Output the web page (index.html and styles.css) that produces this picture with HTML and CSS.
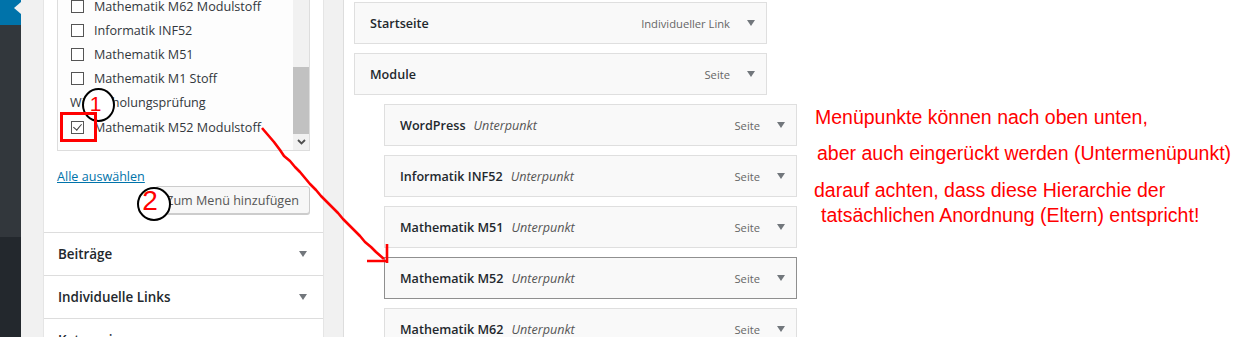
FILE: index.html
```html
<!DOCTYPE html>
<html lang="de">
<head>
  <meta charset="UTF-8" />
  <meta name="viewport" content="width=device-width, initial-scale=1.0" />
  <title>Menüs bearbeiten</title>
  <link rel="stylesheet" href="styles.css">
</head>
<body>
  <!-- Admin-Leiste links -->
  <div class="adminmenu">
    <div class="menu-current"></div>
    <div class="submenu"></div>
    <div class="menu-rest"></div>
  </div>

  <div class="wrap">
    <!-- Spalte mit Seiten zum Hinzufügen -->
    <div class="metaboxes">
      <div class="box-inside">
        <div class="checklist">
          <ul class="items">
            <li><span class="cb"></span>Mathematik M62 Modulstoff</li>
            <li><span class="cb"></span>Informatik INF52</li>
            <li><span class="cb"></span>Mathematik M51</li>
            <li><span class="cb"></span>Mathematik M1 Stoff</li>
            <li class="plain">Wiederholungsprüfung</li>
            <li><span class="cb checked"></span>Mathematik M52 Modulstoff</li>
          </ul>
          <div class="scrollbar">
            <div class="thumb"></div>
            <div class="scroll-down">
              <svg width="9" height="6" viewBox="0 0 9 6"><polyline points="1,1 4.5,4.5 8,1" fill="none" stroke="#505050" stroke-width="1.8"/></svg>
            </div>
          </div>
        </div>
        <a class="select-all" href="#">Alle auswählen</a>
        <div class="add-row">
          <button class="add-btn">Zum Menü hinzufügen</button>
        </div>
      </div>
      <div class="acc">Beiträge<span class="tri"></span></div>
      <div class="acc">Individuelle Links<span class="tri"></span></div>
      <div class="acc">Kategorien<span class="tri"></span></div>
    </div>

    <!-- Menüstruktur -->
    <div class="menu-edit">
      <ul class="menu">
        <li class="item"><span class="title">Startseite</span><span class="type">Individueller Link</span><span class="tri"></span></li>
        <li class="item"><span class="title">Module</span><span class="type">Seite</span><span class="tri"></span></li>
        <li class="item sub"><span class="title">WordPress</span><span class="sub-label">Unterpunkt</span><span class="type">Seite</span><span class="tri"></span></li>
        <li class="item sub"><span class="title">Informatik INF52</span><span class="sub-label">Unterpunkt</span><span class="type">Seite</span><span class="tri"></span></li>
        <li class="item sub"><span class="title">Mathematik M51</span><span class="sub-label">Unterpunkt</span><span class="type">Seite</span><span class="tri"></span></li>
        <li class="item sub active"><span class="title">Mathematik M52</span><span class="sub-label">Unterpunkt</span><span class="type">Seite</span><span class="tri"></span></li>
        <li class="item sub"><span class="title">Mathematik M62</span><span class="sub-label">Unterpunkt</span><span class="type">Seite</span><span class="tri"></span></li>
      </ul>
      <div class="notes">
        <p class="n1">Menüpunkte können nach oben unten,</p>
        <p class="n2">aber auch eingerückt werden (Untermenüpunkt)</p>
        <p class="n3">darauf achten, dass diese Hierarchie der</p>
        <p class="n4">tatsächlichen Anordnung (Eltern) entspricht!</p>
      </div>
    </div>
  </div>

  <!-- Markierungen -->
  <div class="ring ring-1">1</div>
  <div class="box-mark"></div>
  <div class="ring ring-2">2</div>
  <svg class="arrow" width="1243" height="337" viewBox="0 0 1243 337">
    <polyline points="262,128 268,135 274,142 280,150 284,156 290,161 295,167 300,172 305,178 310,184 316,190 321,196 327,202 332,207 338,213 343,219 349,225 354,230 360,236 365,242 371,247 376,252 384,259"
      fill="none" stroke="#f00" stroke-width="2.6" stroke-linejoin="bevel"/>
    <path d="M387,244 L387,263 M367,261 L388,261" fill="none" stroke="#f00" stroke-width="2.6"/>
  </svg>
</body>
</html>
```

FILE: styles.css
```css
body {
  margin: 0;
  height: 100vh;
  overflow: hidden;
  display: flex;
  position: relative;
  background-color: #f1f1f1;
  font-family: "Open Sans", "Noto Sans", sans-serif;
  font-size: 12.6px;
  color: #32373c;
}

/* Admin-Leiste */
.adminmenu {
  width: 21px;
  flex-shrink: 0;
  display: flex;
  flex-direction: column;
}

.menu-current {
  height: 25px;
  background-color: #0073aa;
  position: relative;
}

.menu-current::after {
  content: "";
  position: absolute;
  right: 0;
  top: 2px;
  border-right: 7px solid #f1f1f1;
  border-top: 6px solid transparent;
  border-bottom: 6px solid transparent;
}

.submenu {
  height: 212px;
  background-color: #32373c;
}

.menu-rest {
  flex: 1;
  background-color: #23282d;
}

.wrap {
  flex: 1;
  display: flex;
  padding-left: 22px;
}

/* Linke Spalte */
.metaboxes {
  width: 279px;
  flex-shrink: 0;
  background-color: #fff;
  border-left: 1px solid #e5e5e5;
  border-right: 1px solid #e5e5e5;
}

.box-inside {
  padding: 0 13px 18px 13px;
}

.checklist {
  margin-top: -10px;
  display: flex;
  border: 1px solid #ddd;
  background-color: #fdfdfd;
}

.items {
  list-style: none;
  margin: 0;
  padding: 3px 0 11px 13px;
  flex: 1;
}

.items li {
  height: 24.2px;
  display: flex;
  align-items: center;
  white-space: nowrap;
}

.items li.plain {
  margin-left: -1px;
}

.cb {
  width: 13px;
  height: 13px;
  box-sizing: border-box;
  border: 1px solid #555;
  background-color: #fff;
  margin-right: 10px;
  position: relative;
  flex-shrink: 0;
}

.cb.checked::after {
  content: "";
  position: absolute;
  left: 3px;
  top: 0px;
  width: 4px;
  height: 7px;
  border-right: 1.5px solid #3c3c3c;
  border-bottom: 1.5px solid #3c3c3c;
  transform: rotate(40deg);
}

.scrollbar {
  width: 16px;
  background-color: #f1f1f1;
  display: flex;
  flex-direction: column;
}

.thumb {
  margin-top: 76px;
  height: 67px;
  background-color: #c1c1c1;
}

.scroll-down {
  flex: 1;
  display: flex;
  align-items: center;
  justify-content: center;
}

.select-all {
  display: block;
  width: max-content;
  margin-top: 17px;
  line-height: 18px;
  color: #0073aa;
  text-decoration: underline;
}

.add-row {
  display: flex;
  justify-content: flex-end;
}

.add-btn {
  height: 28px;
  padding: 0 10px;
  border: 1px solid #ccc;
  border-radius: 3px;
  background-color: #f7f7f7;
  box-shadow: 0 1px 0 #ccc;
  color: #555;
  font: inherit;
}

.acc {
  height: 42px;
  border-top: 1px solid #ddd;
  display: flex;
  align-items: center;
  justify-content: space-between;
  padding: 0 16px 0 14px;
  font-size: 13.4px;
  font-weight: 600;
  color: #23282d;
}

.tri {
  width: 0;
  height: 0;
  border-left: 4px solid transparent;
  border-right: 4px solid transparent;
  border-top: 6px solid #72777c;
}

/* Menüstruktur */
.menu-edit {
  flex: 1;
  display: flex;
  margin-left: 19px;
  padding: 2px 0 0 10px;
  background-color: #fff;
  border-left: 1px solid #ddd;
}

.menu {
  list-style: none;
  margin: 0;
  padding: 0;
  width: 443px;
  flex-shrink: 0;
}

.item {
  width: 413px;
  height: 42px;
  box-sizing: border-box;
  margin-bottom: 9px;
  padding: 0 11px 0 15px;
  display: flex;
  align-items: center;
  background-color: #f9f9f9;
  border: 1px solid #dfdfdf;
  white-space: nowrap;
}

.item.sub {
  margin-left: 30px;
}

.item.active {
  border-color: #8f8f8f;
}

.title {
  font-weight: 600;
  color: #23282d;
}

.sub-label {
  margin-left: 8px;
  font-style: italic;
  color: #555;
}

.type {
  margin-left: auto;
  font-size: 11.2px;
  color: #666;
}

.item .tri {
  margin-left: 17px;
}

/* Rote Hinweise */
.notes {
  margin: 102.5px 0 0 17px;
  color: #f00;
  font-family: "Liberation Sans", Arial, sans-serif;
  font-size: 19.5px;
  line-height: 25px;
  white-space: nowrap;
}

.notes p {
  margin: 0;
}

.n1 {
  padding-left: 1px;
}

.n2 {
  margin-top: 11px !important;
  padding-left: 3px;
}

.n3 {
  margin-top: 12px !important;
}

.n4 {
  padding-left: 7px;
}

/* Markierungen */
.ring {
  position: absolute;
  box-sizing: border-box;
  border: 2px solid #000;
  border-radius: 50%;
  background-color: #fff;
  display: flex;
  align-items: center;
  justify-content: center;
  color: #f00;
  font-family: "Liberation Sans", Arial, sans-serif;
  line-height: 1;
}

.ring-1 {
  left: 82px;
  top: 88px;
  width: 33px;
  height: 34px;
  font-size: 21px;
  padding: 0 6px 4px 0;
}

.ring-2 {
  left: 137px;
  top: 187px;
  width: 34px;
  height: 34px;
  font-size: 28px;
  padding: 0 8px 6px 0;
}

.box-mark {
  position: absolute;
  left: 60px;
  top: 112px;
  width: 37px;
  height: 30px;
  box-sizing: border-box;
  border: 3px solid #f00;
}

.arrow {
  position: absolute;
  left: 0;
  top: 0;
  pointer-events: none;
}
```
